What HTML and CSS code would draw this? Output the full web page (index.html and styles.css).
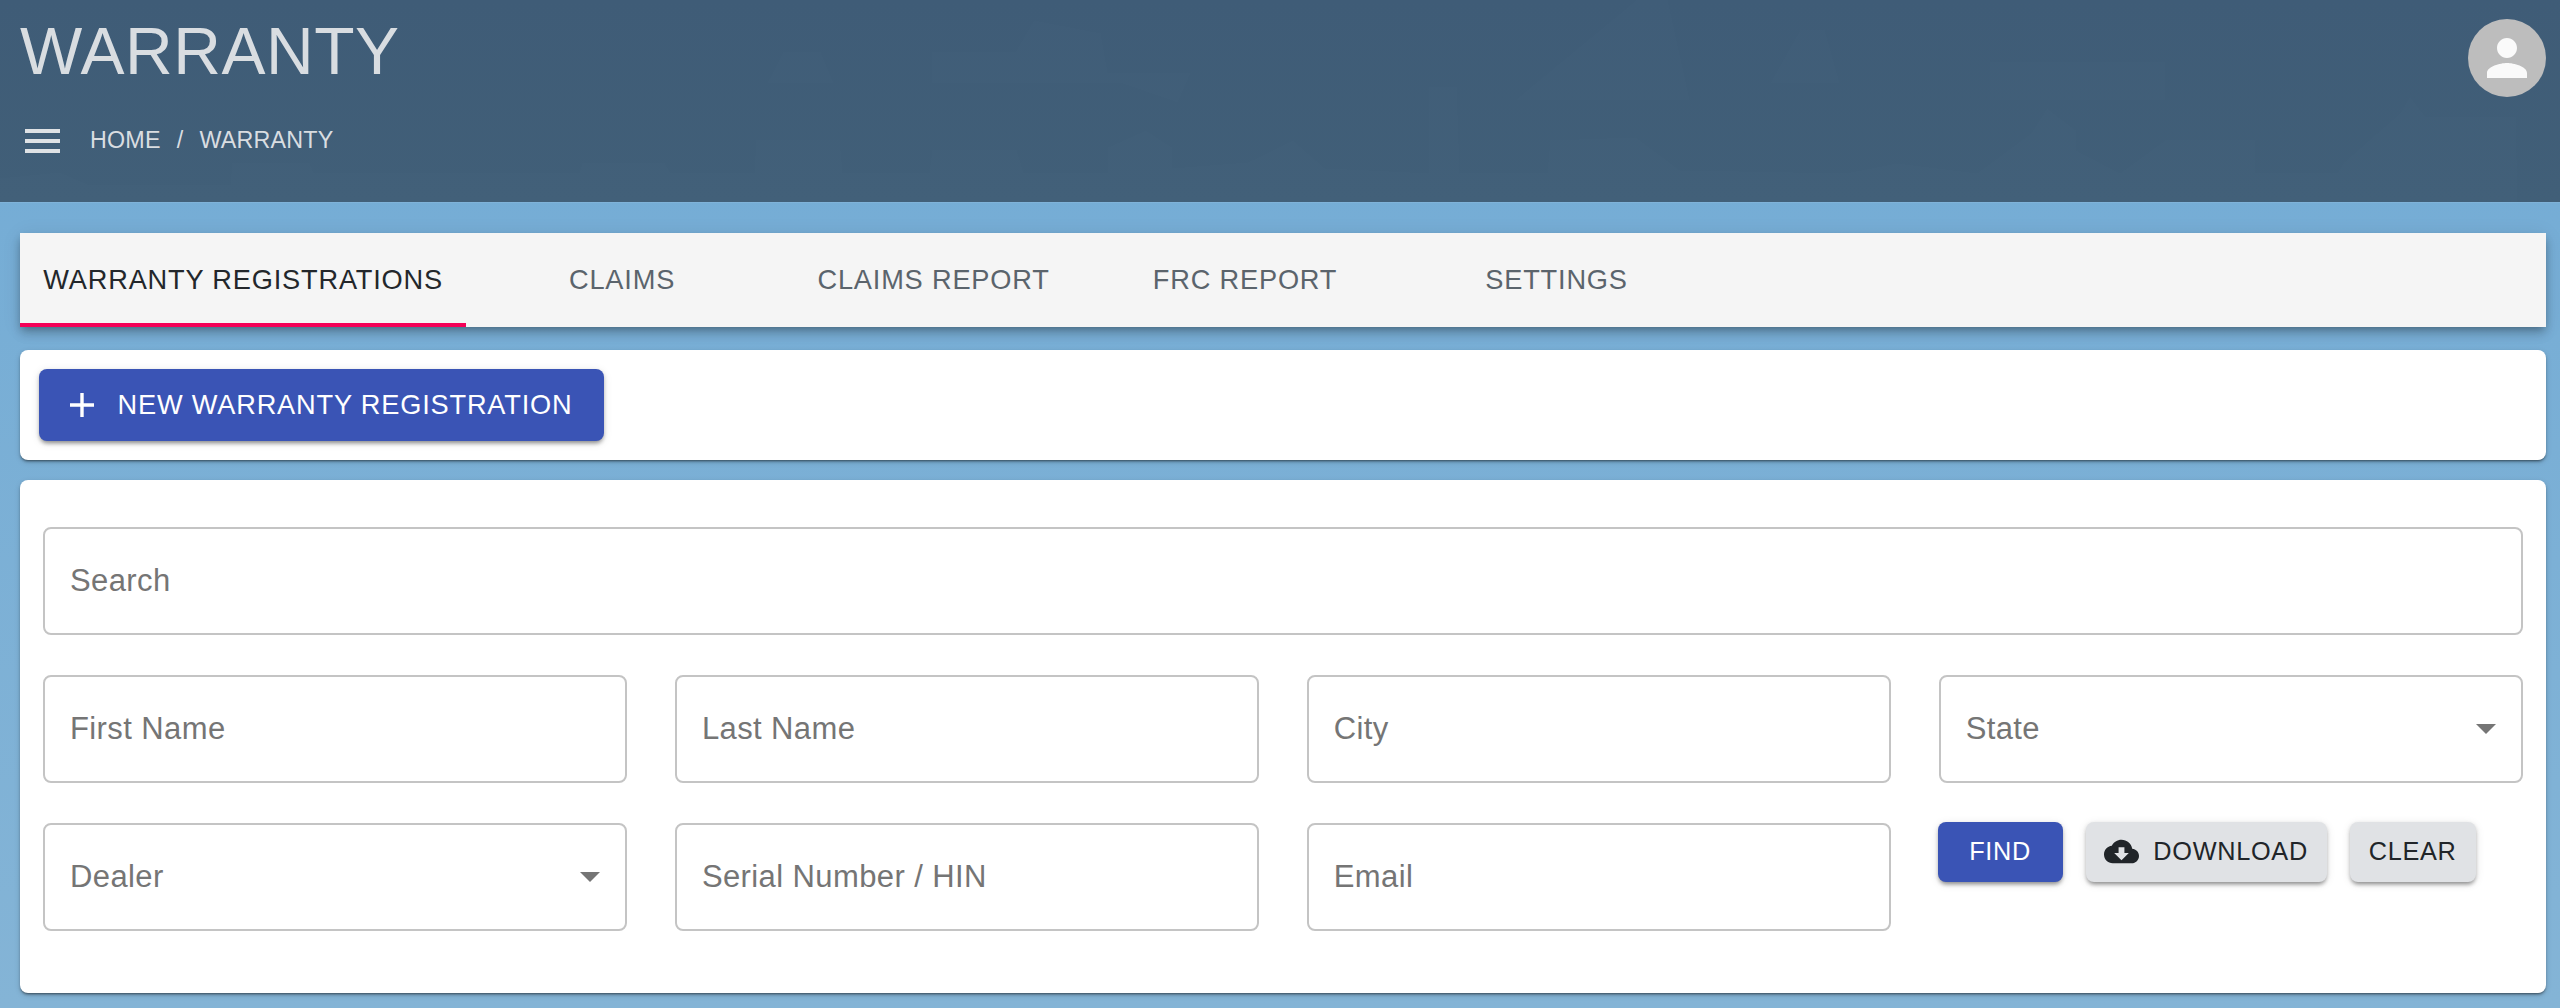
FILE: index.html
```html
<!DOCTYPE html>
<html lang="en">
<head>
<meta charset="utf-8">
<title>Warranty</title>
<link rel="stylesheet" href="styles.css">
</head>
<body>
<header class="app-header">
  <svg class="skyline" viewBox="0 0 2560 202" preserveAspectRatio="none" aria-hidden="true">
    <path d="M0 202V178L60 172 90 185H230L232 163H310L314 173H579L582 163H665L671 173H754L756 140H840L843 173H929L932 150H1017L1024 173H1107L1108 147 1146 130 1172 147V168L1248 162 1293 140 1325 168 1369 170 1429 173V87H1457L1460 173H1547L1550 140 1636 137 1680 170 1846 173 1897 163 1977 173 2031 133 2047 108 2076 130V150L2120 173 2165 140H2255V173H2337L2344 162 2400 113 2410 96 2426 117H2516L2518 202Z"/>
    <path d="M767 83 783 52H821L834 83ZM932 83V52H1015L1034 20 1101 33 1108 73H1191L1178 103 1120 83ZM1515 100 1636 0H1668L1690 100ZM1770 83 1800 30H1825L1840 83ZM1990 100V62H2165V100Z"/>
  </svg>
  <div class="header-main">
    <h1 class="page-title">WARRANTY</h1>
    <div class="crumb-row">
      <svg class="menu-icon" viewBox="0 0 35 24" aria-hidden="true"><path d="M0 0h35v4H0zM0 10h35v4H0zM0 20h35v4H0z"/></svg>
      <nav class="crumbs"><span>HOME</span><span class="crumb-sep">/</span><span>WARRANTY</span></nav>
    </div>
  </div>
  <div class="avatar">
    <svg viewBox="0 0 24 24" aria-hidden="true"><path d="M12 12c2.21 0 4-1.79 4-4s-1.79-4-4-4-4 1.79-4 4 1.79 4 4 4zm0 2c-2.67 0-8 1.34-8 4v2h16v-2c0-2.66-5.33-4-8-4z"/></svg>
  </div>
</header>
<main class="content">
  <div class="tabs">
    <div class="tab tab-active">WARRANTY REGISTRATIONS</div>
    <div class="tab">CLAIMS</div>
    <div class="tab">CLAIMS REPORT</div>
    <div class="tab">FRC REPORT</div>
    <div class="tab">SETTINGS</div>
  </div>
  <section class="card card-action">
    <button class="btn btn-primary btn-large" type="button">
      <svg class="plus-icon" viewBox="0 0 24 24" aria-hidden="true"><path d="M10.3 0h3.4v10.3H24v3.4H13.7V24h-3.4V13.7H0v-3.4h10.3z"/></svg>
      NEW WARRANTY REGISTRATION
    </button>
  </section>
  <section class="card card-filter">
    <div class="field field-wide"><span>Search</span></div>
    <div class="filter-grid">
      <div class="field"><span>First Name</span></div>
      <div class="field"><span>Last Name</span></div>
      <div class="field"><span>City</span></div>
      <div class="field field-select"><span>State</span><i class="caret"></i></div>
      <div class="field field-select"><span>Dealer</span><i class="caret"></i></div>
      <div class="field"><span>Serial Number / HIN</span></div>
      <div class="field"><span>Email</span></div>
      <div class="actions">
        <button class="btn btn-primary btn-find" type="button">FIND</button>
        <button class="btn btn-grey btn-download" type="button">
          <svg class="cloud-icon" viewBox="0 0 24 24" aria-hidden="true"><path d="M19.35 10.04C18.67 6.59 15.64 4 12 4 9.11 4 6.6 5.64 5.35 8.04 2.34 8.36 0 10.91 0 14c0 3.31 2.69 6 6 6h13c2.76 0 5-2.24 5-5 0-2.64-2.05-4.78-4.65-4.96zM17 13l-5 5-5-5h3V9h4v4h3z"/></svg>
          DOWNLOAD
        </button>
        <button class="btn btn-grey btn-clear" type="button">CLEAR</button>
      </div>
    </div>
  </section>
</main>
</body>
</html>
```
FILE: styles.css
```css
* { box-sizing: border-box; }
html, body { height: 100%; }
body {
  margin: 0;
  height: 1008px;
  overflow: hidden;
  font-family: "Liberation Sans", Arial, sans-serif;
  background: linear-gradient(180deg, #72abd5 0%, #84b4d6 100%);
}
.app-header {
  position: relative;
  isolation: isolate;
  height: 202px;
  background: linear-gradient(180deg, #3f5c77 0%, #415f78 100%);
  display: flex;
  justify-content: space-between;
  align-items: flex-start;
  padding: 19px 14px 0 20px;
  box-shadow: 0 1px 0 rgba(255,255,255,.08);
}
.skyline {
  position: absolute;
  inset: 0;
  width: 100%;
  height: 100%;
  z-index: -1;
  fill: rgba(255,255,255,.009);
}
.page-title {
  margin: 0;
  font-size: 66px;
  font-weight: 400;
  line-height: 64px;
  color: #d9dde1;
  letter-spacing: .55px;
}
.crumb-row {
  display: flex;
  align-items: center;
  margin-top: 44px;
  padding-left: 5px;
}
.menu-icon { width: 35px; height: 24px; fill: #dfe2e5; }
.crumbs {
  margin-left: 30px;
  font-size: 23.3px;
  letter-spacing: .2px;
  color: #d9dde1;
  display: flex;
  gap: 16px;
}
.avatar {
  width: 78px;
  height: 78px;
  border-radius: 50%;
  background: #bdbdbd;
  display: flex;
  align-items: center;
  justify-content: center;
}
.avatar svg { width: 60px; height: 60px; fill: #fafafa; }
.content { padding: 31px 14px 0 20px; }
.tabs {
  height: 94px;
  background: #f5f5f5;
  display: flex;
  box-shadow: 0 4px 8px -2px rgba(0,0,0,.3), 0 8px 10px 0 rgba(0,0,0,.1), 0 2px 19px 0 rgba(0,0,0,.08);
}
.tab {
  min-width: 311.5px;
  padding: 3px 23.3px 0;
  display: flex;
  align-items: center;
  justify-content: center;
  font-size: 27.2px;
  letter-spacing: .82px;
  color: #5b646c;
  border-bottom: 4px solid transparent;
}
.tab-active { color: #23272b; border-bottom-color: #f50057; }
.card {
  background: #fff;
  border-radius: 8px;
  box-shadow: 0 2px 2px -1px rgba(0,0,0,.35), 0 2px 3px 0 rgba(0,0,0,.2), 0 2px 6px 0 rgba(0,0,0,.12);
}
.card-action {
  height: 110px;
  margin-top: 23px;
  padding: 19px;
}
.card-filter {
  height: 513px;
  margin-top: 20px;
  padding: 47px 23px 0 23px;
}
.btn {
  border: 0;
  border-radius: 8px;
  font-family: inherit;
  display: inline-flex;
  align-items: center;
  justify-content: center;
}
.btn-primary {
  background: #3a54b5;
  color: #fff;
  box-shadow: 0 4px 4px -2px rgba(0,0,0,.3), 0 2px 4px 0 rgba(0,0,0,.16), 0 2px 10px 0 rgba(0,0,0,.1);
}
.btn-grey {
  background: #e0e2e5;
  color: #212529;
  box-shadow: 0 4px 4px -2px rgba(0,0,0,.3), 0 2px 4px 0 rgba(0,0,0,.16), 0 2px 10px 0 rgba(0,0,0,.1);
}
.btn-large {
  width: 565px;
  height: 72px;
  font-size: 27.2px;
  letter-spacing: .82px;
  gap: 23px;
}
.plus-icon { width: 24px; height: 24px; fill: #fff; }
.field {
  height: 108px;
  border: 2px solid #c4c4c4;
  border-radius: 8px;
  display: flex;
  align-items: center;
  justify-content: space-between;
  padding: 0 25px;
  font-size: 31px;
  letter-spacing: .4px;
  color: #757575;
}
.filter-grid {
  display: grid;
  grid-template-columns: repeat(4, 1fr);
  column-gap: 47.5px;
  row-gap: 40px;
  margin-top: 40px;
}
.caret {
  width: 0;
  height: 0;
  border-left: 10px solid transparent;
  border-right: 10px solid transparent;
  border-top: 10px solid #757575;
}
.actions {
  display: flex;
  align-items: flex-start;
  gap: 23px;
  margin: -1px 0 0 -1px;
}
.actions .btn {
  height: 60px;
  padding: 0 0 2px;
  font-size: 25.3px;
  letter-spacing: .7px;
}
.btn-find { width: 125px; }
.btn-download { width: 241px; gap: 14px; }
.btn-clear { width: 126px; }
.cloud-icon { width: 35px; height: 35px; fill: #212529; }
```
